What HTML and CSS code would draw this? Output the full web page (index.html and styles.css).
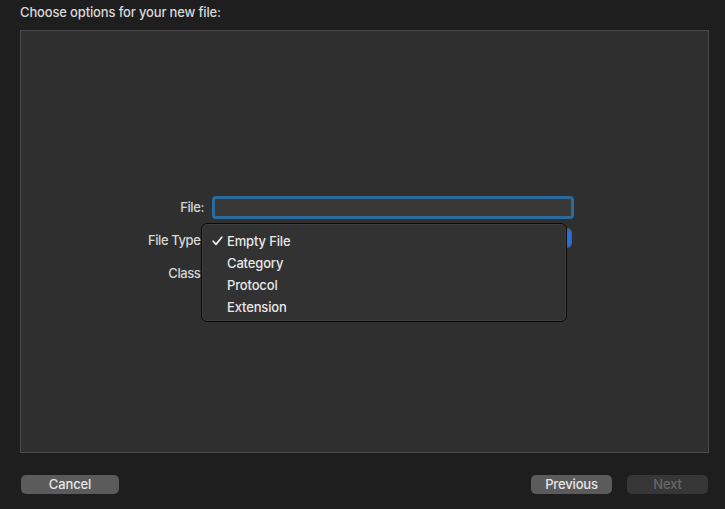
FILE: index.html
```html
<!DOCTYPE html>
<html>
<head>
<meta charset="utf-8">
<link rel="stylesheet" href="styles.css">
</head>
<body>
<div class="title">Choose options for your new file:</div>
<div class="panel">
  <div class="form">
    <div class="label">File:</div>
    <div class="textfield"></div>
    <div class="label">File Type:</div>
    <div class="popup"></div>
    <div class="label">Class:</div>
    <div class="empty"></div>
  </div>
</div>
<div class="footer">
  <div class="btn btn-cancel">Cancel</div>
  <div class="spacer"></div>
  <div class="btn btn-prev">Previous</div>
  <div class="btn btn-next">Next</div>
</div>
<div class="menu">
  <div class="item"><svg class="check" width="11" height="10" viewBox="0 0 11 10"><polyline points="1.2,5.2 4,8.4 9.8,1.2" fill="none" stroke="#ececec" stroke-width="1.7" stroke-linecap="round" stroke-linejoin="round"/></svg>Empty File</div>
  <div class="item">Category</div>
  <div class="item">Protocol</div>
  <div class="item">Extension</div>
</div>
</body>
</html>
```
FILE: styles.css
```css
html, body {
  margin: 0;
  padding: 0;
}
body {
  width: 725px;
  height: 509px;
  background: #1e1e1e;
  font-family: Inter, "Noto Sans", sans-serif;
  font-size: 13px;
  font-weight: 500;
  letter-spacing: -0.15px;
  color: #dcdcdc;
  position: relative;
  overflow: hidden;
}
.title {
  height: 30px;
  box-sizing: border-box;
  padding: 4px 0 0 20px;
  line-height: 16px;
  color: #d9d9d9;
}
.panel {
  margin-left: 20px;
  width: 689px;
  height: 423px;
  box-sizing: border-box;
  border: 1px solid #4a4a4a;
  background: #2f2f2f;
  padding-top: 165px;
}
.form {
  display: grid;
  grid-template-columns: 183px 362px;
  grid-auto-rows: 24px;
  column-gap: 8px;
  row-gap: 9px;
}
.label {
  text-align: right;
  line-height: 23px;
  letter-spacing: -0.4px;
  color: #d6d6d6;
}
.textfield {
  height: 23px;
  box-sizing: border-box;
  border: 3px solid #2c6a9b;
  border-radius: 4px;
  background: #383838;
}
.popup {
  width: 359px;
  height: 18px;
  border-radius: 4px;
  background: linear-gradient(to right, #555 0, #555 354px, #2a6fd6 354px);
  box-shadow: 0 0 0 1px #5e5e5e;
}
.footer {
  margin-top: 22px;
  display: flex;
  padding: 0 17px 0 21px;
}
.spacer { flex: 1; }
.btn {
  height: 19px;
  line-height: 19px;
  border-radius: 5px;
  text-align: center;
  background: #5b5b5b;
  color: #e6e6e6;
}
.btn-cancel { width: 98px; }
.btn-prev { width: 81px; }
.btn-next {
  width: 81px;
  margin-left: 15px;
  background: #363636;
  color: #676767;
}
.menu {
  position: absolute;
  left: 201px;
  top: 223px;
  width: 366px;
  height: 99px;
  box-sizing: border-box;
  border: 1px solid #0a0a0a;
  border-radius: 6px;
  background: #323232;
  box-shadow: inset 0 0 0 1px #3e3e3e;
  padding-top: 6px;
}
.item {
  height: 22px;
  line-height: 22px;
  padding-left: 25px;
  position: relative;
  color: #e8e8e8;
}
.check {
  position: absolute;
  left: 10px;
  top: 6px;
}
```
